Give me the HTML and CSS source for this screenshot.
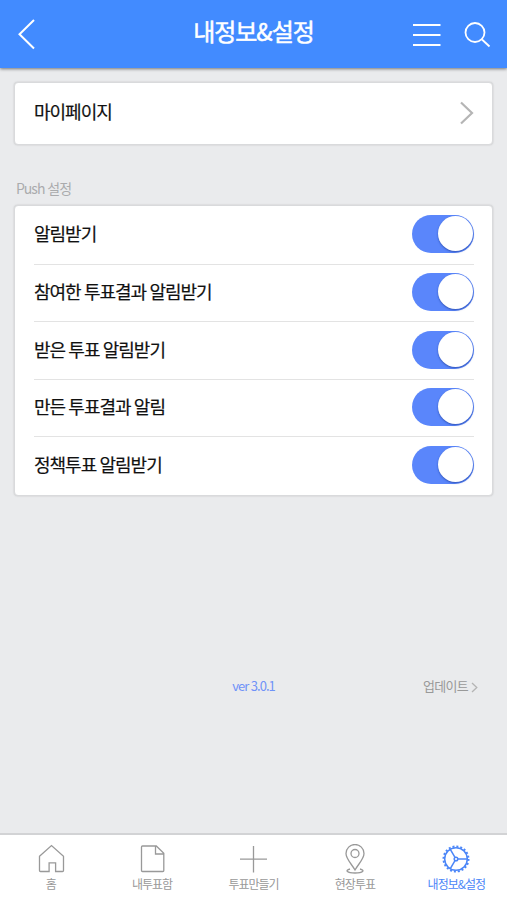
FILE: index.html
```html
<!DOCTYPE html>
<html lang="ko">
<head>
<meta charset="utf-8">
<meta name="viewport" content="width=device-width, initial-scale=1">
<title>내정보&amp;설정</title>
<link rel="stylesheet" href="styles.css">
</head>
<body>
<header class="topbar">
  <svg class="back" width="20" height="32" viewBox="0 0 20 32"><path d="M18 2 3.500 16.200 18 30.500"/></svg>
  <h1 class="title">내정보&amp;설정</h1>
  <div class="actions">
    <svg width="28" height="26" viewBox="0 0 28 26"><path d="M0 3h27.500M0 13h27.500M0 23h27.500"/></svg>
    <svg class="search" width="28" height="28" viewBox="0 0 28 28"><circle cx="11" cy="11.500" r="9.500"/><path d="M18 18.500l7.500 7"/></svg>
  </div>
</header>
<main class="content">
  <a class="card link">
    <span>마이페이지</span>
    <svg class="chevron" width="15" height="25" viewBox="0 0 15 25"><path d="M2 1.500 13 12 2 22.500"/></svg>
  </a>
  <h2 class="section">Push 설정</h2>
  <ul class="card list">
    <li class="row"><span>알림받기</span><i class="switch"></i></li>
    <li class="row"><span>참여한 투표결과 알림받기</span><i class="switch"></i></li>
    <li class="row"><span>받은 투표 알림받기</span><i class="switch"></i></li>
    <li class="row"><span>만든 투표결과 알림</span><i class="switch"></i></li>
    <li class="row"><span>정책투표 알림받기</span><i class="switch"></i></li>
  </ul>
  <div class="version">
    <span class="number">ver 3.0.1</span>
    <a class="update">업데이트<svg width="7" height="11" viewBox="0 0 7 11"><path d="M1 1l4.800 4.500L1 10"/></svg></a>
  </div>
</main>
<nav class="tabs">
  <a class="tab"><svg width="30" height="30" viewBox="0 0 30 30"><path d="M3.500 12.300 15.500 1.500l12 10.800v14.200q0 1-1 1H19.600v-8.700h-6.500v8.700H4.500q-1 0-1-1z"/></svg><span>홈</span></a>
  <a class="tab"><svg width="30" height="30" viewBox="0 0 30 30"><path d="M5.500 2h13.800l7.500 7.200V26.500q0 1-1 1h-20.300q-1 0-1-1V3q0-1 1-1zM18.500 2v8h8.300"/></svg><span>내투표함</span></a>
  <a class="tab"><svg width="30" height="30" viewBox="0 0 30 30"><path d="M15.500 2v26.500M2 15.200h27"/></svg><span>투표만들기</span></a>
  <a class="tab"><svg width="30" height="30" viewBox="0 0 30 30"><path d="M15 26C12 20.500 6 15 6 9.500a9 9 0 0 1 18 0C24 15 18 20.500 15 26z"/><circle cx="15" cy="9.500" r="4"/><path d="M10 25C4.500 26.500 7 29 15 29s10.500-2.500 5-4"/></svg><span>현장투표</span></a>
  <a class="tab active"><svg width="30" height="30" viewBox="0 0 30 30"><circle cx="15" cy="15" r="11.300"/><circle class="teeth" cx="15" cy="15" r="12.500"/><circle cx="15" cy="15" r="1.800"/><path d="M17 15h9.300M14 13.300 9.300 5.300M14 16.700l-4.700 8"/></svg><span>내정보&amp;설정</span></a>
</nav>
</body>
</html>
```
FILE: styles.css
```css
* { box-sizing: border-box; }
body {
  margin: 0;
  height: 900px;
  display: flex;
  flex-direction: column;
  overflow: hidden;
  background: #eaebed;
  color: #111;
  font-family: "Noto Sans CJK KR", "Noto Sans", sans-serif;
}
svg { display: block; flex: none; fill: none; stroke: currentColor; }
.topbar {
  height: 68px;
  flex: none;
  display: grid;
  grid-template-columns: 110px 1fr 110px;
  align-items: center;
  padding: 0 16px;
  background: #428bff;
  color: #fff;
  box-shadow: 0 1px 3px rgba(0, 0, 0, .5);
}
.back { stroke-width: 2; }
.title {
  margin: 0 0 6px;
  text-align: center;
  font-size: 24px;
  line-height: 36px;
  font-weight: 400;
  -webkit-text-stroke: .5px currentColor;
  letter-spacing: -1.050px;
}
.actions {
  display: flex;
  justify-content: flex-end;
  align-items: center;
  gap: 23px;
  margin-top: 1px;
  stroke-width: 2.200;
}
.actions .search { stroke-width: 1.800; margin-right: -1px; }
.content { flex: 1; padding: 14px 14px 0; }
.card {
  margin: 0;
  background: #fff;
  border: 1px solid #d9dadc;
  border-radius: 4px;
  box-shadow: 0 0 2px rgba(0, 0, 0, .18);
  font-size: 18px;
  letter-spacing: -1px;
  word-spacing: -.8px;
  -webkit-text-stroke: .2px currentColor;
}
.link {
  height: 63px;
  display: flex;
  align-items: center;
  justify-content: space-between;
  padding: 0 18px 0 19px;
}
.link span { margin-bottom: 5px; }
.chevron { color: #b5b5b5; stroke-width: 2.200; }
.section {
  margin: 33px 0 6px 2px;
  font-size: 14px;
  line-height: 21px;
  font-weight: 400;
  letter-spacing: -1px;
  color: #aaabad;
}
.list { padding: 0 18px 0 19px; list-style: none; height: 291px; }
.row {
  height: 57.500px;
  display: flex;
  align-items: center;
  justify-content: space-between;
}
.row + .row { border-top: 1.500px solid #e3e3e3; }
.row span { margin-bottom: 3px; }
.switch {
  width: 62px;
  height: 38px;
  margin-bottom: 1px;
  padding: 1px;
  border-radius: 19px;
  background: #5a86fb;
  display: flex;
  justify-content: flex-end;
}
.switch::after {
  content: "";
  width: 35px;
  height: 35px;
  border-radius: 50%;
  background: #fff;
  box-shadow: 0 1px 2px rgba(20, 50, 140, .6);
}
.version {
  display: grid;
  grid-template-columns: 1fr 84px 1fr;
  align-items: center;
  margin-top: 180px;
  font-size: 13px;
  line-height: 20px;
}
.number { grid-column: 2; text-align: center; letter-spacing: -1px; color: #6f92f8; white-space: nowrap; }
.update {
  display: flex;
  align-items: center;
  justify-content: flex-end;
  gap: 3px;
  padding-right: 15px;
  letter-spacing: -.700px;
  color: #999;
}
.update svg { margin-top: 3px; color: #b4b4b4; stroke-width: 1.300; }
.tabs {
  height: 67px;
  flex: none;
  display: grid;
  grid-template-columns: repeat(5, 1fr);
  background: #fff;
  border-top: 2px solid #d2d3d5;
  color: #999;
}
.tab {
  display: flex;
  flex-direction: column;
  align-items: center;
  padding-top: 9px;
  font-size: 12px;
  line-height: 18px;
  letter-spacing: -1px;
  white-space: nowrap;
}
.tab svg { stroke-width: 1.300; }
.tab span { margin-top: 1px; }
.active { color: #4b86f8; }
.active svg { stroke-width: 1.500; }
.tab .teeth { stroke-width: 2; stroke-dasharray: 2 1.927; }
```
